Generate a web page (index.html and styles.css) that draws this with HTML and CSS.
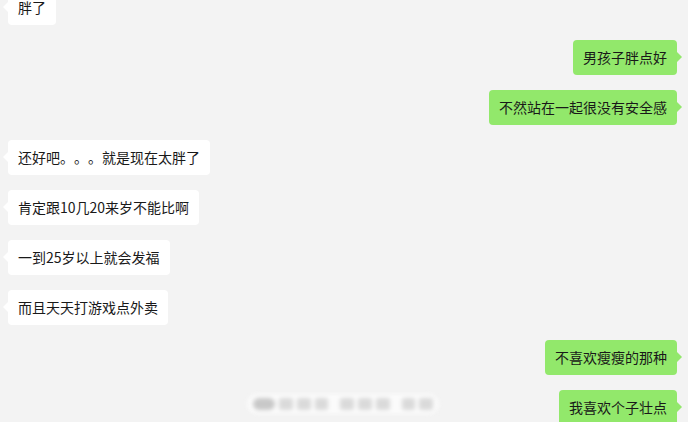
FILE: index.html
```html
<!DOCTYPE html>
<html>
<head>
  <meta charset="utf-8">
  <title>聊天记录</title>
  <link rel="stylesheet" href="styles.css">
</head>
<body>
  <div class="chat">
    <div class="row left"><div class="bubble">胖了</div></div>
    <div class="row right"><div class="bubble">男孩子胖点好</div></div>
    <div class="row right"><div class="bubble">不然站在一起很没有安全感</div></div>
    <div class="row left"><div class="bubble">还好吧。。。就是现在太胖了</div></div>
    <div class="row left"><div class="bubble">肯定跟10几20来岁不能比啊</div></div>
    <div class="row left"><div class="bubble">一到25岁以上就会发福</div></div>
    <div class="row left"><div class="bubble">而且天天打游戏点外卖</div></div>
    <div class="row right"><div class="bubble">不喜欢瘦瘦的那种</div></div>
    <div class="row right"><div class="bubble">我喜欢个子壮点</div></div>
  </div>
  <div class="watermark">
    <span class="blob logo"></span>
    <span class="blob"></span>
    <span class="blob"></span>
    <span class="blob"></span>
    <span class="blob gap"></span>
    <span class="blob"></span>
    <span class="blob"></span>
    <span class="blob gap"></span>
    <span class="blob"></span>
  </div>
</body>
</html>
```

FILE: styles.css
```css
* {
  margin: 0;
  padding: 0;
  box-sizing: border-box;
}

body, html {
  height: 100%;
  overflow: hidden;
}

body {
  background: #f3f3f3;
  font-family: "Microsoft YaHei", "Noto Sans CJK SC", sans-serif;
  font-size: 14px;
  color: #191919;
  position: relative;
}

.chat {
  display: flex;
  flex-direction: column;
  gap: 15px;
  margin-top: -10px;
  padding: 0 11px 0 8px;
}

.row {
  display: flex;
}

.row.right {
  justify-content: flex-end;
}

.bubble {
  position: relative;
  height: 35px;
  line-height: 19px;
  padding: 8px 10px;
  border-radius: 4px;
  background: #fff;
  white-space: nowrap;
  text-spacing-trim: space-all;
}

.bubble::before {
  content: "";
  position: absolute;
  top: 12px;
  border: 5px solid transparent;
}

.left .bubble::before {
  left: -10px;
  border-right-color: #fff;
}

.right .bubble {
  background: #92e86b;
}

.right .bubble::before {
  right: -10px;
  border-left-color: #92e86b;
}

/* blurred watermark at the bottom */
.watermark {
  position: absolute;
  left: 247px;
  top: 394px;
  width: 192px;
  height: 20px;
  display: flex;
  align-items: center;
  gap: 4px;
  padding: 0 6px;
  border-radius: 10px;
  background: #fbfbfb;
  filter: blur(2px);
}

.blob {
  width: 15px;
  height: 12px;
  background: #dadada;
  border-radius: 2px;
}

.blob.logo {
  width: 24px;
  height: 12px;
  border-radius: 6px;
  background: #c8c8c8;
}

.blob.gap {
  margin-left: 8px;
}
```
